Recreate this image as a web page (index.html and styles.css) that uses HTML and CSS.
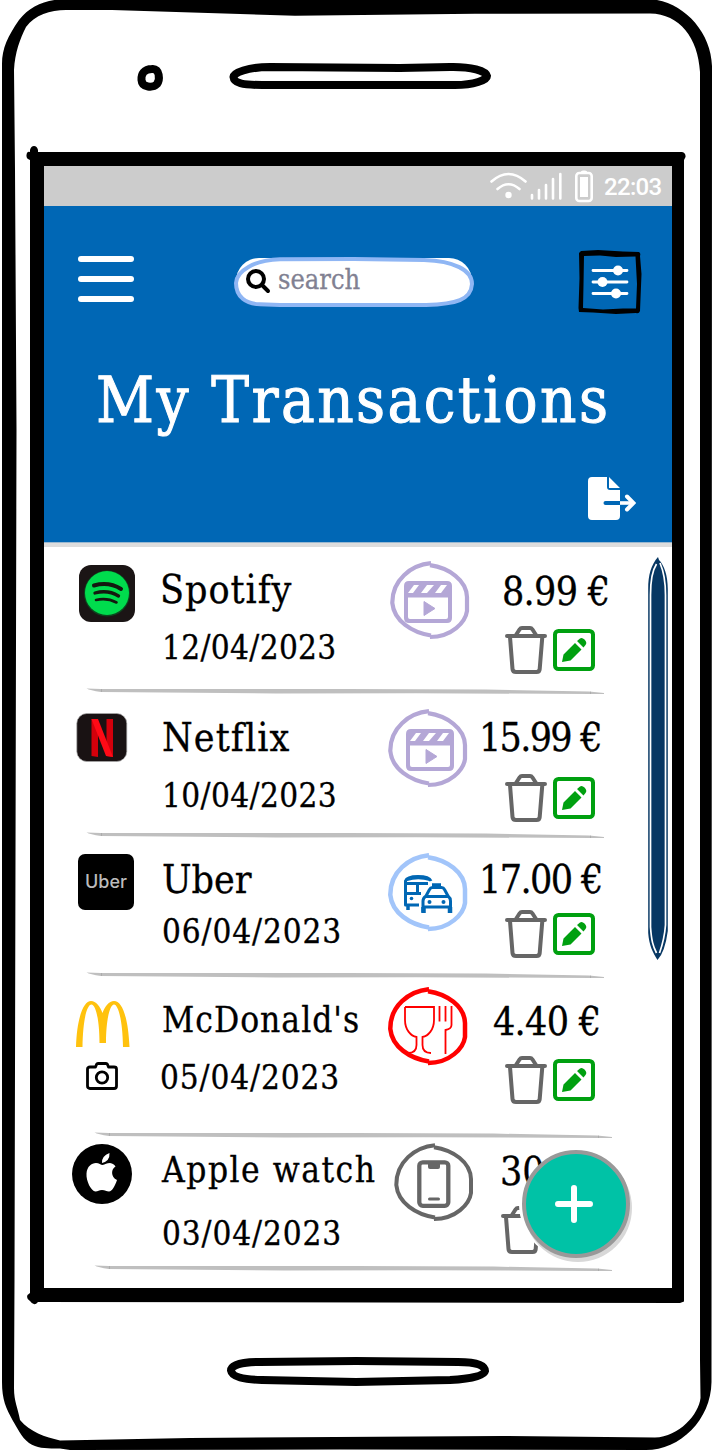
FILE: index.html
```html
<!DOCTYPE html>
<html lang="en">
<head>
<meta charset="utf-8">
<title>My Transactions</title>
<link rel="stylesheet" href="styles.css">
</head>
<body>
<svg class="defs" width="0" height="0" aria-hidden="true">
  <defs>
    <symbol id="rule" viewBox="0 0 520 8"><path fill="#bfbfbf" d="M.5.6 15 1 260 1 400 1.6 503 3.4 518 5 518 6 505 6 330 5.2 190 5.4 15 4Q4 2.500.5.6Z"/><path stroke="#999" stroke-width=".5" d="M15.500 1v3M504.500 3.500v2.500"/></symbol>
    <symbol id="ring" viewBox="0 0 80 80"><path fill="none" stroke="currentColor" d="M41 2.200C21 4 2 19 2.300 42C4 60 22 71.500 41 74.500M40 4.200C59 7 76.500 19 77 36V50C75.500 61 62 76 40 76"/></symbol>
    <symbol id="clap" viewBox="0 0 48 42"><path fill="currentColor" fill-rule="evenodd" d="M5 0H43Q48 0 48 5V37Q48 42 43 42H5Q0 42 0 37V5Q0 0 5 0ZM4 16.500V36Q4 38 6 38H42Q44 38 44 36V16.500ZM4 12 10 4H15L9 12ZM17 12 23 4H30L23 12ZM31 12 37 4H43L37 12Z"/><path fill="currentColor" d="M20 20.500 31 27.500 20 34.500Z" stroke="currentColor" stroke-linejoin="round"/></symbol>
    <symbol id="trash" viewBox="0 0 42 48"><path fill="none" stroke="#666" stroke-width="4" stroke-linecap="round" stroke-linejoin="round" d="M2 10H40M11 9 14.500 3.500Q15.500 2 17 2H25Q26.500 2 27.500 3.500L31 9M5 11 7.500 43Q7.800 46 11 46H31.500Q34.500 46 34.700 43L37.300 11"/></symbol>
    <symbol id="edit" viewBox="0 0 42 42"><rect x="2" y="2" width="38" height="38" rx="3.500" fill="none" stroke="#00a010" stroke-width="4"/><path fill="#00a010" d="M9 33 10.500 25.500 22 14 28.500 20.500 17.500 31.500ZM24 12 27 9.500Q29 8 31.500 10.500Q34.500 13.500 32.500 16L30.500 18.500Z"/></symbol>
  </defs>
</svg>
<div class="phone">
  <svg class="frame" width="712" height="1450" viewBox="0 0 712 1450" aria-hidden="true">
    <path fill-rule="evenodd" d="M2 64C2 48 8 36 19 20C30 6 45 0 64-1H648C681 0 711 30 712 66L711.500 1382C711 1420 680 1450 646 1450L340 1449.500 70 1450 60 1448.500C48 1448.500 38 1449 29 1443C21 1437 17 1427 13 1421C6 1408 2 1400 2 1382ZM14 70C15 52 20 39 26 27C35 15 50 10 66 10H112L295 15.800 475 13.800 650 13.500C680 14 698 38 700 72V1360L700.500 1398C699 1414 679 1437 655 1437.500L500 1436 190 1438 60 1440.500C45 1437 30 1432 20 1420C18 1408 14 1402 14 1388L14.500 1280 16.500 430 15 170Z"/>
    <path fill-rule="evenodd" d="M30 150Q31 146 34 146T38 150V152H682Q686 153 685.500 157L684 160V1301.500L680 1303 38 1302Q34 1307 30 1301Q26 1299 27.500 1295L30 1293V160Q26 159 26.500 155T30 152ZM44 166V1288H672V166Z"/>
    <g fill="none" stroke="#000" stroke-width="8">
      <path d="M152 69C160 68 160 80 157 84C153 88 142 88 141.500 80C141 74 144 69 152 69Z"/>
      <path d="M270 67C248 67 233 73 233.500 77C234 83 242 85 262 85H455C474 85 487 80 487 76C486 71 471 66.500 450 67L400 68Z"/>
      <path d="M260 1362C242 1362 231 1365 231 1370.500C232 1377 244 1379.500 262 1380L356 1382 450 1380C471 1379 484 1376 485 1371C485 1365 476 1362 458 1362L356 1361Z"/>
    </g>
  </svg>

  <main class="screen">
    <div class="status">
      <svg class="wifi" width="37" height="30" viewBox="0 0 37 30"><g fill="none" stroke="#fff" stroke-width="2.600" stroke-linecap="round"><path d="M1.500 10.500Q18.500-4.500 35.500 10.500M7.500 18Q18.500 8.500 29.500 18"/></g><circle cx="18.500" cy="24" r="3.200" fill="#fff"/></svg>
      <svg class="signal" width="32" height="30" viewBox="0 0 32 30"><path stroke="#fff" stroke-width="2.600" stroke-linecap="round" d="M2 24V27.500M9 19V27.500M16 14V27.500M23 8V27.500M30.300 3V27.500"/></svg>
      <svg class="battery" width="18" height="33" viewBox="0 0 18 33"><path fill="#fff" d="M5.500 2.500Q6 .5 8 .5H10Q12 .5 12.500 2.500Z"/><rect x="1.300" y="3" width="15.400" height="28" rx="3" fill="none" stroke="#fff" stroke-width="2.600"/><path fill="#fff" d="M5 7H13V27H5Z"/></svg>
      <span class="clock">22:03</span>
    </div>

    <header class="header">
      <div class="tools">
        <div class="menu"><i></i><i></i><i></i></div>
        <div class="search">
          <svg class="search-line" width="240" height="50" viewBox="0 0 240 50"><path fill="none" stroke="#8fb6f4" stroke-width="4" d="M46 2.200C20 3 2.500 14 2 26C2 40 12 47 26 47.300L46 48H192C222 47 237 43 238 27C238 13 220 4 190 3L120 2Z"/></svg>
          <svg class="lens" width="25" height="25" viewBox="0 0 25 25"><circle cx="10" cy="10" r="8" fill="none" stroke="#000" stroke-width="4"/><path stroke="#000" stroke-width="4" stroke-linecap="round" d="m16 16 6 6"/></svg>
          <span class="placeholder">search</span>
        </div>
        <svg class="filter" width="64" height="64" viewBox="0 0 64 64"><path fill-rule="evenodd" d="M1 3 3 1 20 0 45 1.500 61 2Q63 3 62 6L63.500 24 62 61Q61 64 58 63L38 64 15 62.500 1 62L.5 58 1.500 28ZM6 6 5.500 35 5 58 25 59.500 45 58.500 58 58.500 59 34 57.500 6.500 38 7 22 5.500Z"/><path stroke="#fff" stroke-width="2.800" stroke-linecap="round" d="M15 20.500H49M15 32H49M15 43.500H49"/><g fill="#fff"><circle cx="40" cy="20.500" r="5"/><circle cx="24.500" cy="32" r="5"/><circle cx="38" cy="43.500" r="5"/></g></svg>
      </div>
      <h1 class="title">My Transactions</h1>
      <svg class="export" width="48" height="43" viewBox="0 0 48 43"><path fill="#fff" d="M4 0H19V10Q19 13 22 13H32V39Q32 43 28 43H4Q0 43 0 39V4Q0 0 4 0ZM21 0 32 11H21Z"/><path d="M17.500 26H32" stroke="#0067b5" stroke-width="4" stroke-linecap="round"/><path d="M32 26H45" stroke="#fff" stroke-width="3.600"/><path d="m39 19.500 6.500 6.500-6.500 6.500" fill="none" stroke="#fff" stroke-width="4" stroke-linecap="round"/></svg>
    </header>
    <div class="edge"></div>

    <section class="list">
      <article class="row spotify">
        <div class="logo"><svg width="56" height="57" viewBox="0 0 56 57"><rect width="56" height="57" rx="12" fill="#1b1515"/><circle cx="28" cy="28.500" r="23" fill="#006b25" opacity=".6"/><circle cx="28" cy="28" r="22" fill="#00dc4d"/><g fill="none" stroke="#14180f" stroke-linecap="round"><path stroke-width="4" d="M15 20.500Q30 16.500 42 24"/><path stroke-width="3.300" d="M16 28Q29 24.500 39.500 31"/><path stroke-width="2.600" d="M17 35Q28 32.500 37.500 37.500"/></g></svg></div>
        <div class="info"><span class="name">Spotify</span><span class="date">12/04/2023</span></div>
        <div class="cat"><svg width="80" height="80"><use href="#ring" stroke-width="4.200"/><use href="#clap" x="14" y="20" width="48" height="42"/></svg></div>
        <div class="money"><span class="price">8.99 €</span><span class="acts"><svg width="42" height="48"><use href="#trash"/></svg><svg width="42" height="42"><use href="#edit"/></svg></span></div>
        <svg class="rule" width="520" height="8"><use href="#rule"/></svg>
      </article>

      <article class="row netflix">
        <div class="logo"><svg width="52" height="50" viewBox="0 0 52 50"><rect x=".8" y=".5" width="50" height="48" rx="10" fill="#191213" stroke="#aaa" stroke-width=".7"/><path fill="#d4000b" d="M15.500 6H22V44L15.500 43ZM30.500 6H37V44L30.500 43Z"/><path fill="#ff0a16" d="M15.500 6H22L37 44 30 43Z"/></svg></div>
        <div class="info"><span class="name">Netflix</span><span class="date">10/04/2023</span></div>
        <div class="cat"><svg width="80" height="80"><use href="#ring" stroke-width="4.200"/><use href="#clap" x="18" y="20" width="48" height="42"/></svg></div>
        <div class="money"><span class="price">15.99 €</span><span class="acts"><svg width="42" height="48"><use href="#trash"/></svg><svg width="42" height="42"><use href="#edit"/></svg></span></div>
        <svg class="rule" width="520" height="8"><use href="#rule"/></svg>
      </article>

      <article class="row uber">
        <div class="logo"><span class="uber-mark">Uber</span></div>
        <div class="info"><span class="name">Uber</span><span class="date">06/04/2023</span></div>
        <div class="cat"><svg width="80" height="80"><use href="#ring" stroke-width="4.500"/><g fill="none" stroke="#0067b4" stroke-width="3"><path stroke-linejoin="round" d="M31 52H17.500V28Q19 23.500 30 23.500T43 28M17.500 30.500H40M29.500 30V40M17.500 40.500H33"/><path stroke-width="3.500" d="M20 52V57"/><path stroke-width="2" d="M19 27Q30 23.500 42 27"/><path stroke-linejoin="round" d="M35 59V48Q35 45 38 43L41.500 36.500Q42.500 34.500 44.500 34.500H53.500Q55.500 34.500 56.500 36.500L60 43Q62.500 45 62.500 48V59M38 43.500H60M35 54H63"/><path stroke-width="4.500" d="M44 32.500H53M35.500 54V60M62 54V60"/></g><g fill="#0067b4"><circle cx="23.500" cy="45.500" r="1.800"/><circle cx="41.500" cy="49" r="2"/><circle cx="55.500" cy="49" r="2"/></g></svg></div>
        <div class="money"><span class="price">17.00 €</span><span class="acts"><svg width="42" height="48"><use href="#trash"/></svg><svg width="42" height="42"><use href="#edit"/></svg></span></div>
        <svg class="rule" width="520" height="8"><use href="#rule"/></svg>
      </article>

      <article class="row mcd">
        <div class="logo"><svg width="54" height="47" viewBox="0 0 54 47"><path fill="#ffc20e" d="M0 46C1 15 8 0 15 0C20 0 24 5 26.500 12C29 5 33 0 38 0C46 0 52 15 53.500 46H47C46.500 18 42 3.500 38 3.500C34 3.500 30 18 30 42H23.500C23.500 18 19.500 3.500 15.500 3.500C11 3.500 7 18 6.500 46Z"/></svg><svg class="camera" width="32" height="28" viewBox="0 0 32 28"><g fill="none" stroke="#000" stroke-width="2.800"><path stroke-linejoin="round" d="M1.500 24V7Q1.500 5 4 5H9.500L10.500 2.500Q11 1.500 12 1.500H20Q21 1.500 21.500 2.500L22.500 5H28Q30.500 5 30.500 7V24Q30.500 26.500 28 26.500H4Q1.500 26.500 1.500 24Z"/><circle cx="16" cy="15.500" r="5.700"/></g></svg></div>
        <div class="info"><span class="name">McDonald's</span><span class="date">05/04/2023</span></div>
        <div class="cat"><svg width="80" height="80"><use href="#ring" stroke-width="4.500"/><g fill="none" stroke="red" stroke-width="1.800"><path d="M17 20H46V33C46 43 40 49 34.500 50V58Q34.500 66 43 66M17 20V33C17 43 23 49 28.500 50V58Q28.500 66 20 66"/><path d="M51.500 19V34.500M57.500 19V34.500M63.500 19V38Q63.500 42 57.500 43V67"/></g></svg></div>
        <div class="money"><span class="price">4.40 €</span><span class="acts"><svg width="42" height="48"><use href="#trash"/></svg><svg width="42" height="42"><use href="#edit"/></svg></span></div>
        <svg class="rule" width="520" height="8"><use href="#rule"/></svg>
      </article>

      <article class="row apple">
        <div class="logo"><svg width="60" height="60" viewBox="0 0 60 60"><circle cx="30" cy="30" r="30"/><path fill="#fff" d="M37.500 9Q38 17 30 19Q29.500 12 37.500 9ZM30.500 21C33 20.500 35 19 38 19Q42 19.500 43.500 22.500C39 25 38.500 33 45 36C43 42 40 47.500 37 47.500C34.500 47.500 33 46 30 46C27 46 26 47.500 23.500 47.500C19 47 14 37 14.500 29.500C15 22.500 19.500 19 24 19C27 19 29 21 30.500 21Z"/></svg></div>
        <div class="info"><span class="name">Apple watch</span><span class="date">03/04/2023</span></div>
        <div class="cat"><svg width="80" height="80"><use href="#ring" stroke-width="4"/><rect x="25.300" y="19.300" width="29" height="43.500" rx="3.500" fill="none" stroke="#666" stroke-width="4.300"/><path fill="#666" d="M34 20H46V24Q46 26 44 26H36Q34 26 34 24Z"/><path stroke="#666" stroke-width="3" stroke-linecap="round" d="M35.500 56H44.500"/></svg></div>
        <div class="money"><span class="price">30</span><span class="acts"><svg width="42" height="48"><use href="#trash"/><circle cx="75" cy="-2" r="57" fill="#fff"/></svg></span></div>
        <svg class="rule" width="520" height="8"><use href="#rule"/></svg>
      </article>
    </section>

    <svg class="scroll" width="20" height="404" viewBox="0 0 20 404"><path fill="#073763" d="M10 0C3 8 .2 18 .2 32V376C1 388 5 396 9.500 403Q17 395 19.800 374V32C19.800 18 16 8 11 3Z"/><path fill="none" stroke="#fff" stroke-width="1.700" d="M8.500 7C4 14 2.500 25 2.500 38V370C3.500 384 5 389 8.500 396M12 6C15.500 14 17.500 25 17.500 38V368C16.500 382 14 389 11.500 396"/></svg>
    <button class="fab" aria-label="Add transaction"><svg width="38" height="38" viewBox="0 0 38 38"><path stroke="#fff" stroke-width="6" stroke-linecap="round" d="M19 3V35M3 19H35"/></svg></button>
  </main>
</div>
</body>
</html>
```
FILE: styles.css
```css
* { box-sizing: border-box; }
body { margin: 0; background: #fff; }
svg { display: block; flex: none; }
.defs { position: absolute; }

.phone {
  position: relative;
  width: 712px;
  height: 1450px;
  padding: 166px 40px 0 44px;
  overflow: hidden;
  background: #fff;
  font-family: "Roboto Slab", "DejaVu Serif Condensed", "DejaVu Serif", serif;
  color: #000;
}
.frame { position: absolute; left: 0; top: 0; }
.screen { position: relative; width: 628px; height: 1122px; }

/* Status bar */
.status {
  display: flex;
  align-items: flex-start;
  height: 40px;
  padding: 5px 10px 0 446px;
  background: #ccc;
}
.signal { margin-left: 3px; }
.battery { margin: -1px 0 0 13px; }
.clock {
  margin-left: 11px;
  font: 500 24px/32px Roboto, sans-serif;
  letter-spacing: -.7px;
  color: #fff;
}

/* Header */
.header { height: 336px; padding-top: 44px; background: #0067b5; }
.tools { display: flex; align-items: flex-start; height: 64px; padding: 0 30px 0 34px; }
.menu { display: grid; gap: 14px; width: 56px; padding-top: 6px; }
.menu i { height: 6px; border-radius: 3px; background: #fff; }
.search {
  position: relative;
  display: flex;
  align-items: flex-start;
  width: 236px;
  height: 46px;
  margin: 8px 0 0 102px;
  padding: 11px 0 0 10px;
  border-radius: 23px;
  background: #fff;
}
.search-line { position: absolute; left: -2px; top: -1px; }
.placeholder {
  margin: -8px 0 0 7px;
  font-size: 27px;
  line-height: 38px;
  color: #818192;
  -webkit-text-stroke: .3px;
}
.filter { margin-left: auto; }
.title {
  height: 90px;
  margin: 42px 0 0 52px;
  font-size: 63px;
  font-weight: 400;
  line-height: 90px;
  letter-spacing: 2.4px;
  white-space: nowrap;
  color: #fff;
  -webkit-text-stroke: 1px;
}
.export { margin: 31px 0 0 544px; }
.edge { height: 5px; background: #ddd; border-top: 1px solid #9ab8d0; }

/* Transaction list */
.row {
  display: grid;
  grid-template-columns: 118px 226px 91px 1fr;
  grid-template-rows: 1fr 8px;
  height: var(--height);
}
.logo { padding: var(--logo-y) 0 0 var(--logo-x); }
.info { display: flex; flex-direction: column; padding-top: var(--info-y); gap: var(--info-gap); }
.cat { padding: var(--cat-y) 0 0 var(--cat-x, 0); color: var(--cat-color); }
.money { display: flex; flex-direction: column; padding-top: var(--money-y); gap: var(--money-gap); }
.name, .date, .price {
  height: 40px;
  line-height: 40px;
  white-space: nowrap;
  -webkit-text-stroke: .3px;
}
.name, .price { font-size: 39px; }
.name { letter-spacing: var(--name-track, 0); }
.date { font-size: 33px; letter-spacing: var(--date-track, .9px); }
.price { padding-left: var(--price-x, 0); letter-spacing: var(--price-track, 0); }
.acts { display: flex; align-items: center; gap: 6px; padding-left: 26px; }
.rule { grid-column: 1 / -1; margin: 1px 0 0 42px; }

.spotify { --height: 148px; --logo-x: 35px; --logo-y: 18px; --info-y: 23px; --info-gap: 18px; --cat-x: 2px; --cat-y: 14px; --cat-color: #b4a7d6; --money-y: 25px; --money-gap: 14px; --price-x: 23px; --price-track: -.7px; --name-track: .95px; --date-track: .35px; }
.netflix { --height: 144px; --logo-x: 32px; --logo-y: 18px; --info-y: 23px; --info-gap: 18px; --cat-y: 14px; --cat-color: #b4a7d6; --money-y: 23px; --money-gap: 16px; --price-track: -1.7px; --name-track: 1.1px; --date-track: .4px; }
.uber { --height: 140px; --logo-x: 34px; --logo-y: 15px; --info-y: 21px; --info-gap: 12px; --cat-y: 14px; --cat-color: #a2c5fa; --money-y: 21px; --money-gap: 10px; --price-track: -1.6px; }
.mcd { --height: 160px; --logo-x: 32px; --logo-y: 22px; --info-y: 21px; --info-gap: 18px; --cat-y: 8px; --cat-color: #f00; --money-y: 23px; --money-gap: 14px; --price-x: 14px; --price-track: -.7px; --name-track: 1px; }
.apple { --height: 133px; --logo-x: 28px; --logo-y: 5px; --info-y: 11px; --info-gap: 24px; --cat-x: 6px; --cat-y: 4px; --cat-color: #666; --money-y: 13px; --money-gap: 14px; --price-x: 21px; --name-track: 1.5px; }
.spotify .name, .mcd .date { margin-left: -2px; }
.mcd .name, .apple .name { font-size: 35px; }
.mcd .rule, .apple .rule { margin-left: 50px; }
.apple .acts { padding-left: 22px; }
.camera { margin: 14px 0 0 10px; }
.uber-mark {
  display: grid;
  place-items: center;
  width: 56px;
  height: 56px;
  border-radius: 7px;
  background: #000;
  color: #bbb;
  font: 500 18px/56px Inter, sans-serif;
}

/* Overlays */
.scroll { position: absolute; left: 604px; top: 391px; }
.fab {
  position: absolute;
  left: 478px;
  top: 984px;
  display: grid;
  width: 108px;
  height: 108px;
  padding: 31px 0 0 29px;
  place-items: start;
  border: 4px solid #999;
  border-radius: 50%;
  background: #00c2a6;
  box-shadow: 2px 4px 0 #d8d8d8;
}
```
